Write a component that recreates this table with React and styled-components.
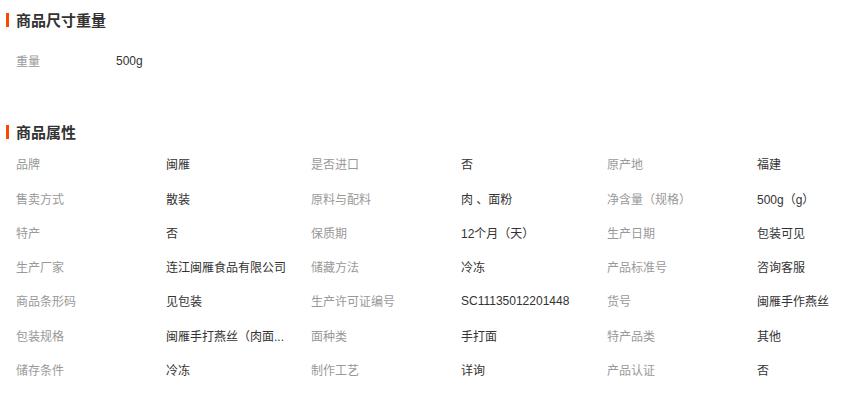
import styled, { createGlobalStyle } from "styled-components";

const dimensions = [{ label: "重量", value: "500g" }];

const attributes = [
  ["品牌", "闽雁", "是否进口", "否", "原产地", "福建"],
  ["售卖方式", "散装", "原料与配料", "肉 、面粉", "净含量（规格）", "500g（g）"],
  ["特产", "否", "保质期", "12个月（天）", "生产日期", "包装可见"],
  ["生产厂家", "连江闽雁食品有限公司", "储藏方法", "冷冻", "产品标准号", "咨询客服"],
  ["商品条形码", "见包装", "生产许可证编号", "SC11135012201448", "货号", "闽雁手作燕丝"],
  ["包装规格", "闽雁手打燕丝（肉面...", "面种类", "手打面", "特产品类", "其他"],
  ["储存条件", "冷冻", "制作工艺", "详询", "产品认证", "否"],
];

function App() {
  return (
    <>
      <GlobalStyle />
      <Page>
        <Title>
          <Mark />
          商品尺寸重量
        </Title>
        <DimList>
          {dimensions.map((d) => (
            <DimRow key={d.label}>
              <DimLabel>{d.label}</DimLabel>
              <Value>{d.value}</Value>
            </DimRow>
          ))}
        </DimList>

        <Title>
          <Mark />
          商品属性
        </Title>
        <AttrList>
          {attributes.map((row) => (
            <AttrRow key={row[0]}>
              {row.map((text, i) =>
                i % 2 === 0 ? (
                  <Label key={i}>{text}</Label>
                ) : (
                  <Value key={i}>{text}</Value>
                )
              )}
            </AttrRow>
          ))}
        </AttrList>
      </Page>
    </>
  );
}

export default App;

const GlobalStyle = createGlobalStyle`
  body {
    margin: 0;
    background: #fff;
    font-family: "Liberation Sans", "Noto Sans CJK SC", sans-serif;
  }
`;

const Page = styled.div`
  width: 860px;
  height: 396px;
  padding-top: 4.5px;
  box-sizing: border-box;
  overflow: hidden;
`;

const Title = styled.div`
  display: flex;
  align-items: center;
  gap: 7px;
  height: 30px;
  padding-left: 6px;
  font-size: 15px;
  font-weight: bold;
  color: #333;
`;

const Mark = styled.span`
  width: 3px;
  height: 14px;
  background: #ff4400;
`;

const DimList = styled.div`
  padding: 9px 0 38.7px;
`;

const DimRow = styled.div`
  display: grid;
  grid-template-columns: 100px 1fr;
  align-items: center;
  height: 34.33px;
  padding-left: 16px;
`;

const DimLabel = styled.span`
  font-size: 12px;
  color: #999;
`;

const AttrList = styled.div`
  display: flex;
  flex-direction: column;
`;

const AttrRow = styled.div`
  display: grid;
  grid-template-columns: 150px 145px 150px 146px 150px 1fr;
  align-items: center;
  height: 34.33px;
  padding-left: 16px;
`;

const Label = styled.span`
  font-size: 12px;
  color: #999;
  white-space: nowrap;
`;

const Value = styled.span`
  max-width: 130px;
  font-size: 12px;
  color: #333;
  white-space: nowrap;
`;
